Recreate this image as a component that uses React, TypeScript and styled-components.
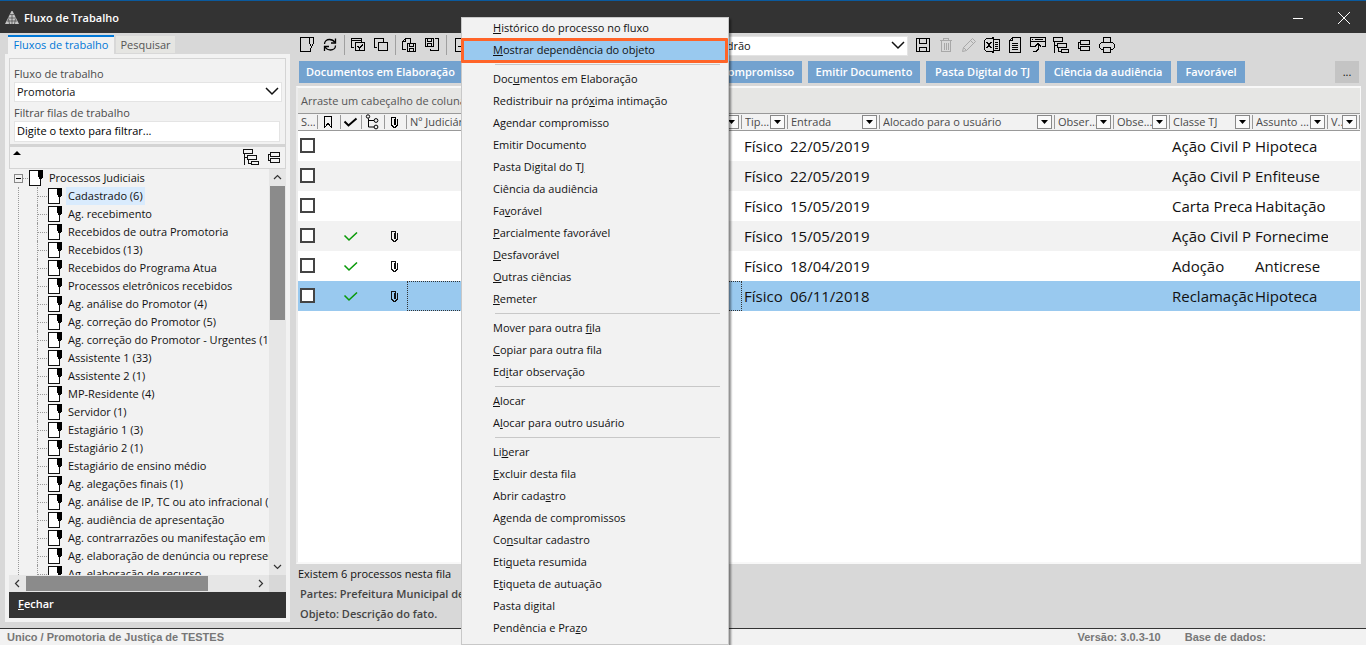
import React from "react";
import styled, { createGlobalStyle, css } from "styled-components";

const GlobalStyle = createGlobalStyle`
  * { box-sizing: border-box; }
  html, body { margin: 0; padding: 0; }
  body {
    background: #d8d8d8;
    font: 11px/16px "Open Sans", "Noto Sans", sans-serif;
    color: #111;
    overflow: hidden;
  }
  button, input, select { font: inherit; color: inherit; margin: 0; }
  ul { list-style: none; margin: 0; padding: 0; }
`;

/* ---------- icons ---------- */

const Svg = styled.svg`
  display: block;
  flex: none;
  fill: none;
  stroke: currentColor;
  stroke-width: 1;
`;

const ICONS = {
  docPin: (
    <>
      <path d="M10 .5H1.500v14h10v-4" />
      <path d="M10.500 .5h4v6l-1.500 2.500h-1l-1.500-2.500z" />
      <path d="M12.500 9v2" />
    </>
  ),
  refresh: (
    <>
      <path strokeWidth="1.300" d="M2.500 7c0-2.800 2.300-4.500 5-4.500 2.300 0 4.300 1.200 5.500 3M13.500 8.500c0 2.800-2.300 4.500-5 4.500-2.300 0-4.300-1.200-5.500-3" />
      <path strokeWidth="1.300" d="M13.500 1.500v4.500h-4.500M2.500 14v-4.500h4.500" />
    </>
  ),
  windowsCheck: (
    <>
      <path d="M4 10.500h-2.500v-9h10v3M1.500 3.500h10" />
      <path d="M5.500 5.500h9v8h-9z" />
      <path strokeWidth="1.400" d="M7.500 9l2 2.500 3.500-4" />
    </>
  ),
  windows: (
    <>
      <path d="M4 10.500h-2.500v-9h9v3" />
      <rect x="5.500" y="5.500" width="9" height="8" />
    </>
  ),
  openSave: (
    <>
      <path d="M5 12.500h-3.500v-8l3-3h5v4M4.500 1.500v3h-3" />
      <rect x="6.500" y="6.500" width="8" height="8" />
      <path d="M8.500 6.500v3h4v-3M8.500 14.500v-3h4v3" />
    </>
  ),
  saveOut: (
    <>
      <rect x="1.500" y="1.500" width="8" height="8" />
      <path d="M3.500 1.500v3h4v-3M3.500 9.500v-3h4v3M11 1.500h3.500v12h-8v-2" />
    </>
  ),
  pageAdd: <path d="M14.500 1.500h-11v13h11M6 9.500h7M9.500 6v7" />,
  save: (
    <>
      <rect x="1.500" y="1.500" width="13" height="13" />
      <path d="M4.500 1.500v5h7v-5M4.500 14.500v-4h7v4" />
    </>
  ),
  trash: (
    <path d="M3.500 4v10.500h9V4M2 3.500h12M5.500 3.500v-2h5v2M6.500 6v7M8.500 6v7M10.500 6v7" />
  ),
  pencil: <path d="M1.500 14.500l1-4 9-9 3 3-9 9zM9.500 3.500l3 3M2.500 10.500l3 3" />,
  excel: (
    <>
      <path d="M9.500 .5l-2 1h-5l-2 2v9l2 2h5l2 1zM10 2.500h5.500v11H10" />
      <path d="M11 5.500h3M11 7.500h3M11 9.500h3M11 11.500h3" />
      <path strokeWidth="1.500" d="M2.500 5l5 6M7.500 5l-5 6" />
    </>
  ),
  document: (
    <>
      <path d="M5.500 .5h8v15h-11v-12zM5.500 .5v3h-3" />
      <path d="M5 6.500h6M5 8.500h6M5 10.500h6M5 12.500h6" />
    </>
  ),
  windowArrow: (
    <>
      <path d="M5 9.500H.5v-9h15v9H12M.5 4.500h15" />
      <path d="M2 2.500h1M5 2.500h8" />
      <path d="M3 14.500h3l2-2v-5M5 9.500l3-3 3 3" />
    </>
  ),
  tree: (
    <>
      <rect x=".5" y=".5" width="9" height="4" />
      <rect x="4.500" y="6.500" width="9" height="4" />
      <rect x="8.500" y="12.500" width="7" height="3" />
      <path d="M1.500 4.500v11M1.500 8.500h3M5.500 10.500v4h3" />
    </>
  ),
  collapse: (
    <>
      <rect x="4.500" y="3.500" width="9" height="4" />
      <rect x="4.500" y="9.500" width="9" height="4" />
      <path d="M4.500 5.500h-2v6h2" />
    </>
  ),
  print: (
    <>
      <path d="M4.500 5.500v-5h7v5M4.500 12.500h-2l-2-2v-3l2-2h11l2 2v3l-2 2h-2" />
      <rect x="4.500" y="10.500" width="7" height="5" />
    </>
  ),
  bookmark: <path d="M3.500 2.500h7v11l-3.500-4-3.500 4z" />,
  check: <path strokeWidth="2" d="M1.500 7.500l4 4 8-7" />,
  hierarchy: (
    <>
      <circle cx="3" cy="2.500" r="1.700" />
      <circle cx="11" cy="6.500" r="1.900" />
      <circle cx="11" cy="13" r="1.900" />
      <path d="M3.500 4.500v8.500h5.500M3.500 6.500h5.500" />
    </>
  ),
  clip: <path d="M7.500 5v5.500h1v-6.500l-1-1h-2l-1 1v7l2 2h2l2-2v-6" />,
  down: <path strokeWidth="1.500" d="M2 5l6 6 6-6" />,
  minimize: <path d="M3 8.500h10" />,
  close: <path d="M2 2l12 12M14 2L2 14" />,
} as const;

type IconName = keyof typeof ICONS;

const SMOOTH: IconName[] = ["refresh", "pencil", "down", "close", "check", "hierarchy"];

function Icon({ name, size = 16 }: { name: IconName; size?: number }) {
  return (
    <Svg
      width={size}
      height={size}
      viewBox="0 0 16 16"
      shapeRendering={SMOOTH.includes(name) ? "auto" : "crispEdges"}
      aria-hidden="true"
    >
      {ICONS[name]}
    </Svg>
  );
}

function PageIcon() {
  return (
    <Svg width={14} height={16} viewBox="0 0 14 16" shapeRendering="crispEdges" aria-hidden="true">
      <rect x=".5" y=".5" width="11" height="15" fill="#fff" />
      <path stroke="none" fill="#000" d="M9 0h5v7l-1 1v1h-3v-1l-1-1z" />
    </Svg>
  );
}

function Logo() {
  return (
    <Svg width={14} height={14} viewBox="0 0 14 14" aria-hidden="true">
      <path stroke="none" fill="#c4c4c4" d="M6.500 0h1l6.500 13h-14z" />
      <path stroke="#444" strokeWidth=".7" d="M3 7h8M2 10h10M5 3.500h4M4.500 13l-1-5M9.500 13l1-5M7 4v9" />
    </Svg>
  );
}

function Arrow({ d }: { d: string }) {
  return (
    <Svg width={9} height={9} viewBox="0 0 9 9" aria-hidden="true">
      <path d={d} strokeWidth="1.200" />
    </Svg>
  );
}

/* ---------- window frame ---------- */

const Window = styled.div`
  height: 100vh;
  display: flex;
  flex-direction: column;
`;

const TitleBar = styled.header`
  flex: none;
  height: 33px;
  display: flex;
  align-items: center;
  padding: 2px 14px 0 5px;
  border-top: 1px solid #0a5a9e;
  background: #333;
  color: #fff;
`;

const Title = styled.h1`
  flex: 1;
  margin: 0 0 0 5px;
  font-size: 11px;
  line-height: 16px;
  font-weight: 600;
`;

const BareButton = styled.button`
  display: flex;
  align-items: center;
  justify-content: center;
  padding: 0;
  border: 0;
  background: none;
`;

const FrameButton = styled(BareButton)`
  width: 16px;
  height: 16px;
  margin-left: 30px;
`;

const Body = styled.div`
  flex: 1;
  min-height: 0;
  display: flex;
`;

const StatusBar = styled.footer`
  flex: none;
  height: 17px;
  display: flex;
  align-items: center;
  gap: 24px;
  padding: 0 100px 0 7px;
  border-top: 1px solid #333;
  background: #f2f2f2;
  color: #777;
  font: bold 11px/16px "Liberation Sans", Arial, sans-serif;
`;

const StatusText = styled.span<{ $grow?: boolean }>`
  flex: ${(p) => (p.$grow ? 1 : "none")};
`;

/* ---------- left side ---------- */

const Side = styled.aside`
  flex: none;
  width: 290px;
  display: flex;
  flex-direction: column;
  padding: 2px 0 6px 5px;
`;

const Tabs = styled.div`
  flex: none;
  display: flex;
  align-items: flex-end;
  height: 19px;
  padding-left: 3px;
`;

const Tab = styled.button<{ $active?: boolean }>`
  height: ${(p) => (p.$active ? 19 : 18)}px;
  padding: 0;
  border: 0;
  font-size: 11px;
  line-height: 16px;
  ${(p) =>
    p.$active
      ? css`
          width: 106px;
          padding-bottom: 2px;
          border-top: 2px solid #0078d7;
          background: #f2f2f2;
          color: #0078d7;
        `
      : css`
          width: 59px;
          margin-left: 2px;
          border-bottom: 1px solid #d8d8d8;
          background: #e5e5e2;
          color: #555;
        `}
`;

const SidePanel = styled.div`
  flex: 1;
  min-height: 0;
  display: flex;
  flex-direction: column;
  padding: 4px;
  background: #f2f2f2;
`;

const Filters = styled.div`
  flex: none;
  display: flex;
  flex-direction: column;
  height: 87px;
  padding: 7px 3px 0 4px;
  border: 1px solid #d4d4d4;
`;

const Label = styled.label`
  color: #4a4a4a;
  line-height: 16px;
`;

const SelectWrap = styled.div<{ $w?: number; $mb?: number }>`
  flex: none;
  position: relative;
  width: ${(p) => (p.$w ? p.$w + "px" : "100%")};
  margin-bottom: ${(p) => p.$mb ?? 0}px;
  > svg {
    position: absolute;
    right: 2px;
    top: 1px;
    pointer-events: none;
  }
`;

const Select = styled.select`
  appearance: none;
  display: block;
  width: 100%;
  height: 20px;
  padding: 0 20px 0 2px;
  border: 1px solid #e4e4e4;
  border-radius: 0;
  background: #fff;
  line-height: 16px;
`;

const TextInput = styled.input`
  height: 21px;
  margin-right: 2px;
  padding: 0 2px 2px;
  border: 1px solid #e4e4e4;
  background: #fff;
  &::placeholder { color: #000; opacity: 1; }
`;

const TreeTools = styled.div`
  flex: none;
  display: flex;
  align-items: center;
  height: 24px;
  padding: 0 0 2px 3px;
  border: 1px solid #d4d4d4;
  border-top-width: 2px;
`;

const UpMark = styled(BareButton)`
  width: 8px;
  height: 4px;
  margin: 0 auto 8px 0;
`;

const ToolSlot = styled(BareButton)`
  width: 23px;
  height: 20px;
`;

const TreeArea = styled.div`
  flex: 1;
  min-height: 0;
  display: flex;
`;

const Tree = styled.div`
  flex: 1;
  min-width: 0;
  overflow: hidden;
`;

const RootRow = styled.div`
  display: flex;
  align-items: center;
  height: 18px;
  padding-left: 5px;
  white-space: nowrap;
`;

const Expander = styled(BareButton)`
  width: 9px;
  height: 9px;
  border: 1px solid #888;
  &::before {
    content: "";
    width: 5px;
    height: 1px;
    background: #000;
  }
`;

const Branch = styled.span<{ $w: number }>`
  flex: none;
  width: ${(p) => p.$w}px;
  margin-right: 1px;
  border-top: 1px dotted #999;
`;

const Children = styled.ul`
  margin-left: 9px;
  padding-left: 18px;
  border-left: 1px dotted #999;
`;

const Leaf = styled.li`
  display: flex;
  align-items: center;
  height: 18px;
  border-left: 1px dotted #999;
  white-space: nowrap;
`;

const NodeName = styled.span<{ $selected?: boolean }>`
  margin-left: 4px;
  padding: 0 2px;
  line-height: 18px;
  background: ${(p) => (p.$selected ? "#d9ebfd" : "transparent")};
`;

const VScroll = styled.div`
  flex: none;
  width: 17px;
  display: flex;
  flex-direction: column;
  align-items: center;
  justify-content: space-between;
  background: #e6e6e6;
`;

const HScroll = styled.div`
  flex: none;
  height: 17px;
  display: flex;
  align-items: center;
  background: #e6e6e6;
`;

const ScrollButton = styled(BareButton)`
  flex: none;
  width: 17px;
  height: 17px;
  color: #333;
`;

const Thumb = styled.div<{ $vertical?: boolean }>`
  background: #8b8b8b;
  ${(p) =>
    p.$vertical
      ? css`
          width: 15px;
          height: 134px;
          margin-bottom: auto;
        `
      : css`
          width: 182px;
          height: 15px;
          margin-right: auto;
        `}
`;

const Corner = styled.div`
  width: 17px;
  height: 17px;
  background: #d8d8d8;
`;

const CloseButton = styled.button`
  flex: none;
  height: 26px;
  padding: 0 9px 2px;
  border: 0;
  background: #333;
  color: #fff;
  font-weight: 600;
  text-align: left;
  line-height: 16px;
`;

/* ---------- main area ---------- */

const Main = styled.main`
  flex: 1;
  min-width: 0;
  display: flex;
  flex-direction: column;
  padding: 2px 5px 0 6px;
`;

const Toolbar = styled.div`
  flex: none;
  display: flex;
  align-items: center;
  height: 20px;
  white-space: nowrap;
`;

const ToolButton = styled(ToolSlot)<{ $off?: boolean }>`
  flex: none;
  padding-right: 1px;
  color: ${(p) => (p.$off ? "#a8a8a8" : "#000")};
`;

const Divider = styled.span`
  flex: none;
  width: 1px;
  height: 20px;
  margin: 0 2px;
  background: #a0a0a0;
`;

const LayoutPicker = styled.div`
  display: flex;
  align-items: center;
  margin: 2px 4px 0 239px;
`;

const Actions = styled.div`
  flex: none;
  display: flex;
  gap: 6px;
  margin: 6px 2px 3px 3px;
`;

const Action = styled.button<{ $w: number }>`
  flex: none;
  width: ${(p) => p.$w}px;
  height: 22px;
  padding: 0;
  border: 0;
  background: #73a2cf;
  color: #fff;
  font-weight: 600;
  line-height: 16px;
  white-space: nowrap;
`;

const MoreButton = styled.button`
  width: 24px;
  height: 22px;
  margin-left: auto;
  padding: 0;
  border: 0;
  background: #c4c4c4;
`;

const GridFrame = styled.section`
  flex: 1;
  min-height: 0;
  border: 2px solid #f8f8f8;
  border-right-width: 1px;
  border-left-color: #ececec;
  background: #fff;
  overflow: hidden;
`;

const GroupBar = styled.div`
  height: 25px;
  padding: 5px 3px;
  background: #e6e6e4;
  color: #555;
  line-height: 16px;
`;

const Table = styled.table`
  width: 100%;
  table-layout: fixed;
  border-collapse: separate;
  border-spacing: 0;
`;

const Th = styled.th`
  padding: 1px 0;
  border-top: 1px solid #999;
  border-bottom: 1px solid #999;
  background: #f2f2f2;
  color: #4a4a4a;
  font-weight: 400;
  text-align: left;
`;

const HeadCell = styled.div<{ $icon?: boolean }>`
  display: flex;
  align-items: center;
  justify-content: ${(p) => (p.$icon ? "center" : "flex-start")};
  height: 14px;
  padding: ${(p) => (p.$icon ? "0 1px 0 0" : "0 2px 0 3px")};
  border-right: 1px solid #999;
  color: ${(p) => (p.$icon ? "#000" : "inherit")};
  line-height: 14px;
`;

const HeadText = styled.span`
  flex: 1;
  min-width: 0;
  overflow: hidden;
  white-space: nowrap;
`;

const FilterButton = styled(BareButton)`
  flex: none;
  width: 15px;
  height: 14px;
  border: 1px solid #888;
  background: #fafafa;
`;

const Row = styled.tr<{ $tone: "plain" | "alt" | "selected" }>`
  height: 30px;
  background: ${(p) => ({ plain: "#fff", alt: "#f2f2f2", selected: "#99c9ef" })[p.$tone]};
`;

const Td = styled.td<{ $focus?: boolean; $green?: boolean }>`
  padding: 0 0 1px 2px;
  overflow: hidden;
  white-space: nowrap;
  font-size: 15px;
  line-height: 20px;
  color: ${(p) => (p.$green ? "#0a9a0a" : "#111")};
  outline: ${(p) => (p.$focus ? "1px dotted #333" : "none")};
  outline-offset: -1px;
`;

const Checkbox = styled.input`
  appearance: none;
  display: block;
  width: 15px;
  height: 15px;
  border: 2px solid #444;
  background: #fff;
`;

const Details = styled.div`
  flex: none;
  height: 64px;
  padding-left: 2px;
`;

const Count = styled.p`
  margin: 0;
  line-height: 20px;
`;

const Fact = styled.p`
  margin: 0 0 0 2px;
  line-height: 20px;
  color: #444;
  font-weight: 600;
`;

/* ---------- context menu ---------- */

const Menu = styled.ul`
  position: absolute;
  left: 461px;
  top: 17px;
  width: 268px;
  padding-bottom: 6px;
  background: #f2f2f2;
  box-shadow: inset 0 0 0 1px #c8c8c8, 2px 2px 2px rgba(0, 0, 0, 0.45);
`;

const MenuEntry = styled.li<{ $active?: boolean }>`
  position: relative;
  ${(p) =>
    p.$active &&
    css`
      background: #99c9ef;
      &::after {
        content: "";
        position: absolute;
        inset: -1px 1px -2px 0;
        border: 3px solid #ff6428;
        border-radius: 1px;
        pointer-events: none;
      }
    `}
`;

const MenuButton = styled.button`
  display: block;
  width: 100%;
  height: 22px;
  padding: 0 0 0 32px;
  border: 0;
  background: none;
  text-align: left;
  line-height: 22px;
`;

const MenuLine = styled.li`
  height: 1px;
  margin: 3px 9px 3px 34px;
  background: #c8c8c8;
`;

const Key = styled.u`
  text-decoration: underline;
  text-underline-offset: 1px;
`;

/* ---------- data ---------- */

const NODES = [
  "Cadastrado (6)",
  "Ag. recebimento",
  "Recebidos de outra Promotoria",
  "Recebidos (13)",
  "Recebidos do Programa Atua",
  "Processos eletrônicos recebidos",
  "Ag. análise do Promotor (4)",
  "Ag. correção do Promotor (5)",
  "Ag. correção do Promotor - Urgentes (1)",
  "Assistente 1 (33)",
  "Assistente 2 (1)",
  "MP-Residente (4)",
  "Servidor (1)",
  "Estagiário 1 (3)",
  "Estagiário 2 (1)",
  "Estagiário de ensino médio",
  "Ag. alegações finais (1)",
  "Ag. análise de IP, TC ou ato infracional (1)",
  "Ag. audiência de apresentação",
  "Ag. contrarrazões ou manifestação em recurso",
  "Ag. elaboração de denúncia ou representação",
  "Ag. elaboração de recurso",
];

/* "&" marks the access key of an entry. */
const MENU: string[][] = [
  ["&Histórico do processo no fluxo", "&Mostrar dependência do objeto"],
  [
    "Doc&umentos em Elaboração",
    "Redistribuir na pró&xima intimação",
    "Agendar compromisso",
    "Emitir Documento",
    "Pasta Digital do T&J",
    "Ciência da audiência",
    "Fa&vorável",
    "&Parcialmente favorável",
    "&Desfavorável",
    "&Outras ciências",
    "&Remeter",
  ],
  ["Mover para outra &fila", "&Copiar para outra fila", "Ed&itar observação"],
  ["&Alocar", "A&locar para outro usuário"],
  [
    "Li&berar",
    "&Excluir desta fila",
    "Abrir cada&stro",
    "A&genda de compromissos",
    "Co&nsultar cadastro",
    "Eti&queta resumida",
    "E&tiqueta de autuação",
    "Pasta digital",
    "Pendência e Pra&zo",
  ],
];

const ACTIONS: [string, number][] = [
  ["Documentos em Elaboração", 163],
  ["Redistribuir na intimação", 193],
  ["Agendar compromisso", 135],
  ["Emitir Documento", 112],
  ["Pasta Digital do TJ", 113],
  ["Ciência da audiência", 126],
  ["Favorável", 68],
];

const TOOLS_LEFT: [IconName, string][][] = [
  [["docPin", "Novo"], ["refresh", "Atualizar"]],
  [["windowsCheck", "Selecionar todos"], ["windows", "Limpar seleção"]],
  [["openSave", "Abrir"], ["saveOut", "Exportar"]],
  [["pageAdd", "Incluir"]],
];

const TOOLS_RIGHT: [IconName, string, boolean?][] = [
  ["save", "Salvar"],
  ["trash", "Excluir", true],
  ["pencil", "Editar", true],
  ["excel", "Planilha"],
  ["document", "Documento"],
  ["windowArrow", "Abrir janela"],
  ["tree", "Expandir"],
  ["collapse", "Recolher"],
  ["print", "Imprimir"],
];

const ICON_COLUMNS: [IconName, number, string][] = [
  ["bookmark", 23, "Marcador"],
  ["check", 21, "Pendência"],
  ["hierarchy", 23, "Dependência"],
  ["clip", 22, "Anexo"],
];

const COLUMNS: [string, number | undefined][] = [
  ["Nº Judiciário", undefined],
  ["Tip...", 46],
  ["Entrada", 92],
  ["Alocado para o usuário", 175],
  ["Obser...", 59],
  ["Obse...", 56],
  ["Classe TJ", 83],
  ["Assunto ...", 75],
  ["V...", 32],
];

const ROWS = [
  { date: "22/05/2019", kind: "Ação Civil P", subject: "Hipoteca", marked: false },
  { date: "22/05/2019", kind: "Ação Civil P", subject: "Enfiteuse", marked: false },
  { date: "15/05/2019", kind: "Carta Preca", subject: "Habitação", marked: false },
  { date: "15/05/2019", kind: "Ação Civil P", subject: "Fornecime", marked: true },
  { date: "18/04/2019", kind: "Adoção", subject: "Anticrese", marked: true },
  { date: "06/11/2018", kind: "Reclamação", subject: "Hipoteca", marked: true },
];

function AccessText({ text }: { text: string }) {
  const at = text.indexOf("&");
  if (at < 0) return <>{text}</>;
  return (
    <>
      {text.slice(0, at)}
      <Key>{text[at + 1]}</Key>
      {text.slice(at + 2)}
    </>
  );
}

function ContextMenu() {
  return (
    <Menu role="menu">
      {MENU.map((group, g) => (
        <React.Fragment key={g}>
          {g > 0 && <MenuLine role="separator" />}
          {group.map((text) => (
            <MenuEntry key={text} role="none" $active={text.startsWith("&Mostrar")}>
              <MenuButton role="menuitem">
                <AccessText text={text} />
              </MenuButton>
            </MenuEntry>
          ))}
        </React.Fragment>
      ))}
    </Menu>
  );
}

function SideArea() {
  return (
    <Side>
      <Tabs role="tablist">
        <Tab $active role="tab" aria-selected="true">Fluxos de trabalho</Tab>
        <Tab role="tab" aria-selected="false">Pesquisar</Tab>
      </Tabs>
      <SidePanel>
        <Filters>
          <Label htmlFor="flow">Fluxo de trabalho</Label>
          <SelectWrap $mb={3}>
            <Select id="flow"><option>Promotoria</option></Select>
            <Icon name="down" />
          </SelectWrap>
          <Label htmlFor="filter">Filtrar filas de trabalho</Label>
          <TextInput id="filter" placeholder="Digite o texto para filtrar..." />
        </Filters>
        <TreeTools>
          <UpMark aria-label="Ocultar filtros">
            <Svg width={8} height={4} viewBox="0 0 8 4" aria-hidden="true">
              <path stroke="none" fill="#000" d="M4 0l4 4h-8z" />
            </Svg>
          </UpMark>
          <ToolSlot aria-label="Expandir"><Icon name="tree" /></ToolSlot>
          <ToolSlot aria-label="Recolher"><Icon name="collapse" /></ToolSlot>
        </TreeTools>
        <TreeArea>
          <Tree>
            <RootRow>
              <Expander aria-label="Recolher" />
              <Branch $w={5} />
              <PageIcon />
              <NodeName>Processos Judiciais</NodeName>
            </RootRow>
            <Children>
              {NODES.map((name, i) => (
                <Leaf key={name}>
                  <Branch $w={9} />
                  <PageIcon />
                  <NodeName $selected={i === 0}>{name}</NodeName>
                </Leaf>
              ))}
            </Children>
          </Tree>
          <VScroll>
            <ScrollButton aria-label="Subir"><Arrow d="M1 6l3.500-3.500L8 6" /></ScrollButton>
            <Thumb $vertical />
            <ScrollButton aria-label="Descer"><Arrow d="M1 3l3.500 3.500L8 3" /></ScrollButton>
          </VScroll>
        </TreeArea>
        <HScroll>
          <ScrollButton aria-label="Esquerda"><Arrow d="M6 1L2.500 4.500 6 8" /></ScrollButton>
          <Thumb />
          <ScrollButton aria-label="Direita"><Arrow d="M3 1l3.500 3.500L3 8" /></ScrollButton>
          <Corner />
        </HScroll>
        <CloseButton><AccessText text="&Fechar" /></CloseButton>
      </SidePanel>
    </Side>
  );
}

function ProcessTable() {
  return (
    <Table>
      <colgroup>
        <col width={20} />
        {ICON_COLUMNS.map(([name, w]) => <col key={name} width={w} />)}
        {COLUMNS.map(([name, w]) => <col key={name} width={w} />)}
      </colgroup>
      <thead>
        <tr>
          <Th><HeadCell><HeadText>S...</HeadText></HeadCell></Th>
          {ICON_COLUMNS.map(([name, , label]) => (
            <Th key={name} aria-label={label}>
              <HeadCell $icon><Icon name={name} /></HeadCell>
            </Th>
          ))}
          {COLUMNS.map(([name]) => (
            <Th key={name}>
              <HeadCell>
                <HeadText>{name}</HeadText>
                <FilterButton aria-label={"Filtrar " + name}>
                  <Svg width={7} height={4} viewBox="0 0 7 4" aria-hidden="true">
                    <path stroke="none" fill="#000" d="M0 0h7l-3.500 4z" />
                  </Svg>
                </FilterButton>
              </HeadCell>
            </Th>
          ))}
        </tr>
      </thead>
      <tbody>
        {ROWS.map((r, i) => {
          const selected = i === ROWS.length - 1;
          return (
            <Row key={i} $tone={selected ? "selected" : i % 2 ? "alt" : "plain"}>
              <Td><Checkbox type="checkbox" aria-label={"Selecionar processo " + (i + 1)} /></Td>
              <Td />
              <Td $green>
                {r.marked && (
                  <Svg width={16} height={16} viewBox="0 0 16 16" aria-hidden="true">
                    <path strokeWidth="1.600" d="M1.500 7.500l4.500 4.500 8-7.500" />
                  </Svg>
                )}
              </Td>
              <Td />
              <Td>{r.marked && <Icon name="clip" />}</Td>
              <Td $focus={selected} />
              <Td>Físico</Td>
              <Td>{r.date}</Td>
              <Td />
              <Td />
              <Td />
              <Td>{r.kind}</Td>
              <Td>{r.subject}</Td>
              <Td />
            </Row>
          );
        })}
      </tbody>
    </Table>
  );
}

export default function App() {
  return (
    <Window>
      <GlobalStyle />
      <TitleBar>
        <Logo />
        <Title>Fluxo de Trabalho</Title>
        <FrameButton aria-label="Minimizar"><Icon name="minimize" /></FrameButton>
        <FrameButton aria-label="Fechar janela"><Icon name="close" /></FrameButton>
      </TitleBar>
      <Body>
        <SideArea />
        <Main>
          <Toolbar>
            {TOOLS_LEFT.map((group, g) => (
              <React.Fragment key={g}>
                {g > 0 && <Divider />}
                {group.map(([name, label]) => (
                  <ToolButton key={name} aria-label={label}><Icon name={name} /></ToolButton>
                ))}
              </React.Fragment>
            ))}
            <LayoutPicker>
              <SelectWrap $w={197}>
                <Select aria-label="Leiaute"><option>Padrão</option></Select>
                <Icon name="down" />
              </SelectWrap>
            </LayoutPicker>
            {TOOLS_RIGHT.map(([name, label, off]) => (
              <ToolButton key={name} aria-label={label} $off={off}><Icon name={name} /></ToolButton>
            ))}
          </Toolbar>
          <Actions>
            {ACTIONS.map(([text, w]) => <Action key={text} $w={w}>{text}</Action>)}
            <MoreButton>...</MoreButton>
          </Actions>
          <GridFrame>
            <GroupBar>Arraste um cabeçalho de coluna aqui para agrupar</GroupBar>
            <ProcessTable />
          </GridFrame>
          <Details>
            <Count>Existem 6 processos nesta fila</Count>
            <Fact>Partes: Prefeitura Municipal de</Fact>
            <Fact>Objeto: Descrição do fato.</Fact>
          </Details>
        </Main>
      </Body>
      <StatusBar>
        <StatusText $grow>Unico / Promotoria de Justiça de TESTES</StatusText>
        <StatusText>Versão: 3.0.3-10</StatusText>
        <StatusText>Base de dados:</StatusText>
      </StatusBar>
      <ContextMenu />
    </Window>
  );
}
